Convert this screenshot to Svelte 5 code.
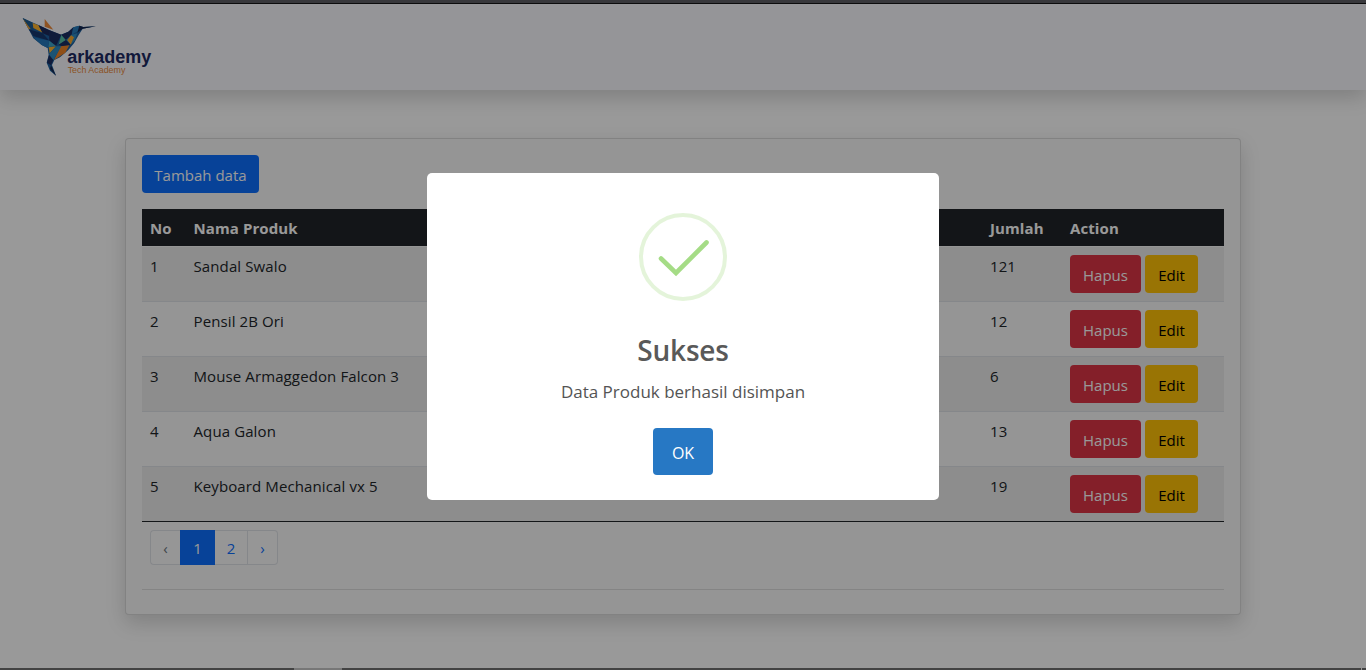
<script>
  const products = [
    { name: 'Sandal Swalo', qty: 121 },
    { name: 'Pensil 2B Ori', qty: 12 },
    { name: 'Mouse Armaggedon Falcon 3', qty: 6 },
    { name: 'Aqua Galon', qty: 13 },
    { name: 'Keyboard Mechanical vx 5', qty: 19 }
  ];
</script>

<div class="window">
  <div class="edge-top"></div>
  <nav>
    <svg class="logo" viewBox="60 48 400 186" width="133.33" height="62" aria-label="arkademy">
      <path fill="#1d5f9e" d="M68 54L115 75L147 90L182 104L205 95L220 82L238 77L250 81L288 79L248 86L236 105L222 130L205 150L180 172L163 180L156 195L168 227L150 212L140 188L146 165L143 144L125 135L100 115L86 88Z"/>
      <path fill="#d9a04a" d="M70 57L84 84L90 84L84 64Z"/>
      <path fill="#1f5d8f" d="M68 54L98 69L100 94L88 86Z"/>
      <path fill="#e9a23b" d="M70 58L86 88L92 87Z"/>
      <path fill="#ffb52e" d="M98 69L116 76L128 98L100 84Z"/>
      <path fill="#1c2b5c" d="M115 75L147 90L148 108L128 100Z"/>
      <path fill="#17376f" d="M86 88L128 100L148 122L100 108Z"/>
      <path fill="#2377bb" d="M100 112L148 122L143 144L125 135Z"/>
      <path fill="#1b2d62" d="M147 90L184 104L168 138L148 122Z"/>
      <path fill="#3ea6ca" d="M148 122L168 138L145 141Z"/>
      <path fill="#58bea3" d="M184 104L198 120L176 134Z"/>
      <path fill="#1b2d62" d="M184 104L205 95L220 82L215 104L198 120Z"/>
      <path fill="#277cbb" d="M220 82L238 77L244 88L215 104Z"/>
      <path fill="#14264f" d="M238 77L250 81L288 79L248 86L232 98Z"/>
      <path fill="#2c8ac2" d="M215 104L232 100L224 122L212 134L198 120Z"/>
      <path fill="#f6a62b" d="M213 106L222 112L212 134L202 120Z"/>
      <path fill="#1b2d62" d="M176 134L198 120L212 134L188 140Z"/>
      <path fill="#ef8427" d="M182 139L208 136L196 158L162 180Z"/>
      <path fill="#ffb52e" d="M146 142L168 139L149 160Z"/>
      <path fill="#2c8ac2" d="M168 139L184 139L160 181L147 163Z"/>
      <path fill="#1b2d62" d="M147 165L160 180L153 196L141 188Z"/>
      <path fill="#16264f" d="M153 196L168 227L150 207Z"/>
      <path fill="#ef8a3a" d="M134 57L160 89L134 80Z"/>
      <text x="202" y="190" class="brand" textLength="252" lengthAdjust="spacingAndGlyphs">arkademy</text>
      <text x="203" y="219" class="tag" textLength="173" lengthAdjust="spacingAndGlyphs">Tech Academy</text>
    </svg>
  </nav>

  <main>
    <section class="card">
      <button class="btn primary">Tambah data</button>
      <table>
        <colgroup><col class="c1" /><col class="c2" /><col class="c3" /><col /></colgroup>
        <thead>
          <tr><th>No</th><th>Nama Produk</th><th>Jumlah</th><th>Action</th></tr>
        </thead>
        <tbody>
          {#each products as p, i}
            <tr>
              <td>{i + 1}</td>
              <td>{p.name}</td>
              <td>{p.qty}</td>
              <td class="act">
                <div class="actions">
                  <button class="btn danger">Hapus</button>
                  <button class="btn warning">Edit</button>
                </div>
              </td>
            </tr>
          {/each}
        </tbody>
      </table>
      <div class="pages">
        <span class="prev">‹</span><span class="active">1</span><span class="two">2</span><span class="next">›</span>
      </div>
      <hr />
    </section>
  </main>

  <div class="backdrop">
    <div class="modal" role="dialog">
      <svg class="check" width="88" height="88" viewBox="0 0 88 88">
        <circle cx="44" cy="44" r="42" fill="none" stroke="#a5dc86" stroke-opacity=".3" stroke-width="4" />
        <path d="M22 45.5L37 60L67.500 29.500" fill="none" stroke="#a5dc86" stroke-width="4.600" stroke-linecap="round" />
      </svg>
      <h2>Sukses</h2>
      <p>Data Produk berhasil disimpan</p>
      <button class="ok">OK</button>
    </div>
  </div>
  <div class="edge-bottom"><i class="thumb"></i><i class="tick"></i></div>
</div>

<style>
  :global(body) { margin: 0; overflow: hidden; }
  .window, .window * { box-sizing: border-box; }
  .window {
    position: relative;
    width: 1366px;
    height: 670px;
    overflow: hidden;
    background: #fff;
    color: #212529;
    font: 15px/24px "Open Sans", "Noto Sans", sans-serif;
  }
  .edge-top {
    position: relative;
    z-index: 6;
    height: 4px;
    background: #38383c;
    border-bottom: 1px solid #0c0c0d;
  }
  nav {
    height: 86px;
    padding: 12px 20px;
    background: #f9f9fd;
    box-shadow: 0 8px 18px rgba(0, 0, 0, .16);
  }
  .logo { display: block; }
  .brand { font: bold 56px "Liberation Sans", Arial, sans-serif; fill: #1d2b63; }
  .tag { font: 26px "Liberation Sans", Arial, sans-serif; fill: #e8893c; }
  main { padding: 48px 125px 0; }
  .card {
    height: 477px;
    padding: 16px;
    border: 1px solid rgba(0, 0, 0, .125);
    border-radius: 4px;
    background: #f8f8f8;
    box-shadow: 0 8px 20px rgba(0, 0, 0, .16);
  }
  button { font: inherit; border: 0; margin: 0; }
  .btn {
    display: block;
    height: 38px;
    padding: 2px 0 0;
    border-radius: 4px;
    font-size: 15px;
  }
  .primary { width: 117px; background: #0d6efd; color: #fff; }
  .danger { width: 71px; background: #dc3545; color: #fff; }
  .warning { width: 53px; background: #ffc107; color: #000; }
  .actions { display: flex; gap: 4px; }
  table {
    width: 1082px;
    margin-top: 16px;
    table-layout: fixed;
    border-collapse: separate;
    border-spacing: 0;
  }
  .c1 { width: 43.5px; }
  .c2 { width: 796.5px; }
  .c3 { width: 80px; }
  th {
    height: 38px;
    padding: 0 8px;
    text-align: left;
    font-weight: 700;
    letter-spacing: .1px;
    color: #fff;
    background: #212328;
    border-bottom: 1px solid #f8f8f8;
  }
  td {
    height: 55px;
    padding: 7px 8px 8px;
    vertical-align: top;
    letter-spacing: .11px;
    border-bottom: 1px solid #dee2e6;
  }
  .act { padding-top: 8px; letter-spacing: 0; }
  tbody tr:nth-child(odd) td { background: #ebebeb; }
  tbody tr:last-child td { border-bottom-color: #212529; }
  .pages { display: flex; margin: 8px 0 0 8px; height: 35px; }
  .pages span {
    height: 35px;
    padding-top: 5px;
    text-align: center;
    color: #0d6efd;
    background: #fbfbfb;
    border: 1px solid #dee2e6;
  }
  .pages .prev { width: 30px; border-right: 0; border-radius: 4px 0 0 4px; color: #6c757d; }
  .pages .active { width: 35px; background: #0d6efd; border-color: #0d6efd; color: #fff; }
  .pages .two { width: 33px; border-left: 0; }
  .pages .next { width: 30px; border-left: 0; border-radius: 0 4px 4px 0; }
  hr { height: 1px; margin: 24px 0 0; border: 0; background: #dcdcdd; }
  .backdrop {
    position: absolute;
    inset: 0;
    z-index: 5;
    display: flex;
    justify-content: center;
    align-items: flex-start;
    padding-top: 173px;
    background: rgba(0, 0, 0, .4);
  }
  .modal {
    display: flex;
    flex-direction: column;
    align-items: center;
    width: 512px;
    height: 327px;
    padding-top: 40px;
    border-radius: 5px;
    background: #fff;
  }
  h2 { margin: 29px 0 0; font-size: 28px; line-height: 40px; font-weight: 600; letter-spacing: -.2px; color: #595959; }
  p { margin: 9px 0 0; font-size: 17px; line-height: 26px; color: #545454; }
  .ok {
    width: 60px;
    height: 47px;
    margin-top: 23px;
    padding: 3px 0 0;
    border-radius: 4px;
    background: #2778c4;
    color: #fff;
    font-size: 16px;
  }
  .edge-bottom {
    position: absolute;
    z-index: 6;
    left: 0;
    right: 0;
    bottom: 0;
    display: flex;
    justify-content: space-between;
    height: 2px;
    padding: 0 4px 0 294px;
    background: #434343;
  }
  .thumb { width: 48px; background: #777; }
  .tick { width: 1px; background: #999; }
</style>
